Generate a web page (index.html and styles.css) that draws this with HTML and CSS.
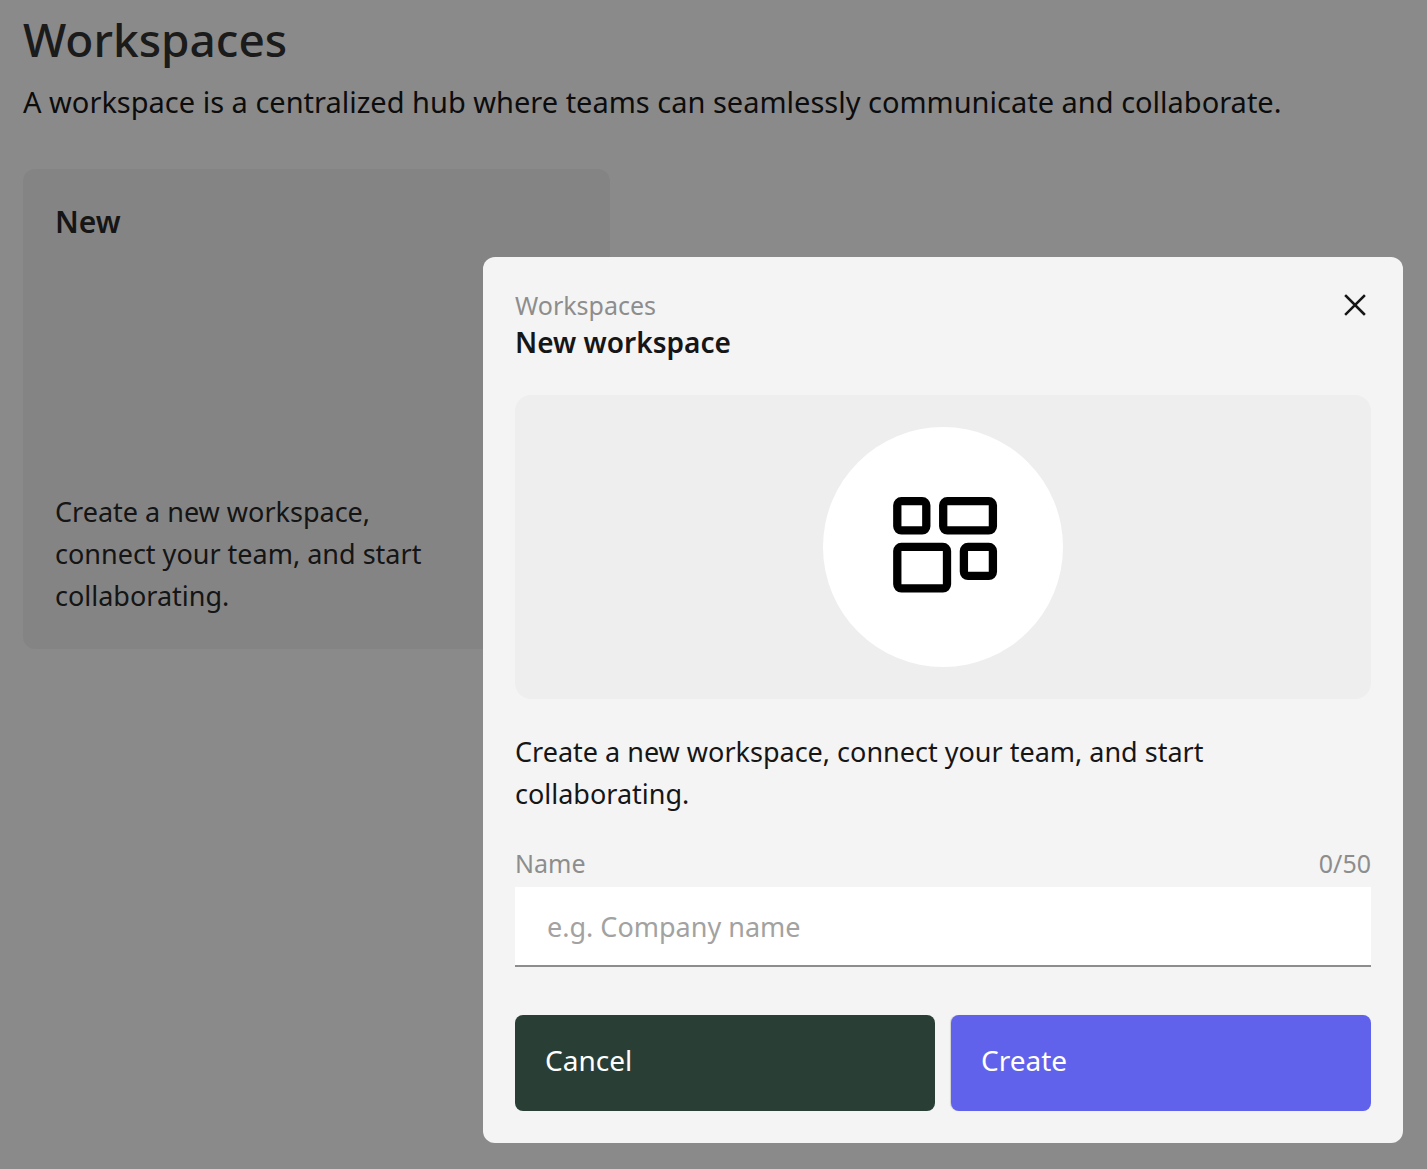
FILE: index.html
```
<!DOCTYPE html>
<html lang="en">
<head>
    <meta charset="UTF-8">
    <meta name="viewport" content="width=device-width, initial-scale=1.0">
    <title>Workspaces</title>
    <link rel="stylesheet" href="styles.css">
</head>
<body>

    <main class="page">
        <h1>Workspaces</h1>
        <p class="intro">A workspace is a centralized hub where teams can seamlessly communicate and collaborate.</p>
        <div class="cards">
            <a href="#new" class="card">
                <h2>New</h2>
                <p>Create a new workspace, connect your team, and start collaborating.</p>
            </a>
        </div>
    </main>

    <div class="overlay">
        <form class="modal" id="new" role="dialog" aria-labelledby="modalTitle">
            <div class="modal-header">
                <div>
                    <p class="modal-label">Workspaces</p>
                    <h2 id="modalTitle">New workspace</h2>
                </div>
                <button type="button" class="btn-close" aria-label="Close">
                    <svg width="32" height="32" viewBox="0 0 32 32">
                        <path d="M7 7L25 25M25 7L7 25" fill="none" stroke="#161616" stroke-width="2.5" stroke-linecap="square"/>
                    </svg>
                </button>
            </div>

            <div class="hero">
                <div class="hero-circle">
                    <svg width="120" height="120" viewBox="0 0 120 120" fill="none" stroke="#000" stroke-width="8.3">
                        <rect x="14.3" y="14.2" width="29" height="29.2" rx="4.1"/>
                        <rect x="60.2" y="14.2" width="49.7" height="29.2" rx="4.1"/>
                        <rect x="14.3" y="59.9" width="49.7" height="41.5" rx="4.1"/>
                        <rect x="80.9" y="59.9" width="29" height="29" rx="4.1"/>
                    </svg>
                </div>
            </div>

            <p class="modal-text">Create a new workspace, connect your team, and start collaborating.</p>

            <div class="field">
                <div class="field-head">
                    <label for="name">Name</label>
                    <span>0/50</span>
                </div>
                <input type="text" id="name" maxlength="50" placeholder="e.g. Company name">
            </div>

            <div class="actions">
                <button type="button" class="btn btn-cancel">Cancel</button>
                <button type="submit" class="btn btn-create">Create</button>
            </div>
        </form>
    </div>

</body>
</html>
```

FILE: styles.css
```
* {
    box-sizing: border-box;
}
body {
    font-family: "Noto Sans", sans-serif;
    font-size: 27px;
    line-height: 42px;
    margin: 0;
    min-height: 100vh;
    background-color: #f3f3f3;
    color: #161616;
}
h1, h2, p {
    margin: 0;
}
h2 {
    font-size: 28px;
    font-weight: 600;
}
.page {
    padding: 8px 23px 24px;
}
h1 {
    font-size: 46px;
    line-height: 62px;
    font-weight: 500;
    color: #303030;
}
.intro {
    font-size: 29px;
    margin: 11px 0 46px;
}
.cards {
    display: flex;
    flex-wrap: wrap;
    gap: 24px;
}
.card {
    display: flex;
    flex-direction: column;
    justify-content: space-between;
    width: 587px;
    max-width: 100%;
    min-height: 480px;
    padding: 32px;
    background: #e9e9e9;
    border-radius: 12px;
    color: #262626;
    text-decoration: none;
}
.card h2 {
    font-size: 30px;
}
.card p {
    max-width: 400px;
}
.overlay {
    position: fixed;
    inset: 0;
    display: flex;
    justify-content: flex-end;
    align-items: flex-end;
    padding: 24px 24px 26px;
    background: rgba(0, 0, 0, 0.43);
}
.modal {
    display: flex;
    flex-direction: column;
    gap: 32px;
    width: 100%;
    max-width: 920px;
    padding: 32px;
    background: #f4f4f4;
    border-radius: 12px;
}
.modal-header {
    display: flex;
    justify-content: space-between;
    align-items: flex-start;
}
.modal-label {
    font-size: 25px;
    line-height: 32px;
    color: #8d8d8d;
}
.btn-close {
    width: 32px;
    height: 32px;
    padding: 0;
    border: none;
    background: none;
    cursor: pointer;
}
.btn-close svg {
    display: block;
}
.hero {
    display: flex;
    justify-content: center;
    padding: 32px;
    background: #eeeeee;
    border-radius: 16px;
}
.hero-circle {
    display: flex;
    align-items: center;
    justify-content: center;
    width: 240px;
    height: 240px;
    background: #fff;
    border-radius: 50%;
}
.field {
    display: flex;
    flex-direction: column;
    gap: 8px;
}
.field-head {
    display: flex;
    justify-content: space-between;
    font-size: 25px;
    line-height: 32px;
    color: #8d8d8d;
}
.field input {
    width: 100%;
    height: 80px;
    padding: 0 32px;
    border: none;
    border-bottom: 2px solid #8d8d8d;
    border-radius: 0;
    background: #fff;
    color: #161616;
    font: inherit;
}
.field input::placeholder {
    color: #a2a2a2;
}
.actions {
    display: flex;
    gap: 16px;
    margin-top: 16px;
}
.btn {
    flex: 1;
    height: 96px;
    padding: 0 30px 6px;
    border: none;
    border-radius: 8px;
    color: #fff;
    font: inherit;
    font-size: 28px;
    text-align: left;
    cursor: pointer;
}
.btn-cancel {
    background: #293f36;
}
.btn-create {
    background: #6062eb;
    box-shadow: -1px 0 1px rgba(0, 0, 0, 0.15);
}
```
